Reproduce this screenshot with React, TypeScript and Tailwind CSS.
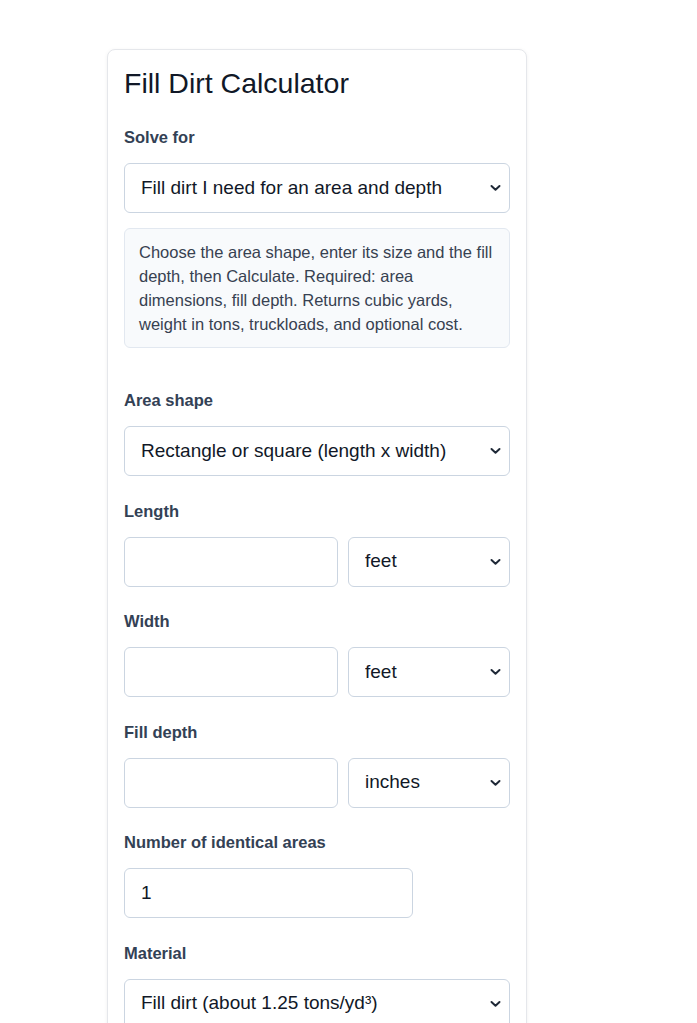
import { useState } from 'react'

const font = { fontFamily: '"Liberation Sans", Arial, sans-serif' }

function Chevron() {
  return (
    <svg
      className="pointer-events-none absolute right-[9px] top-1/2 -translate-y-1/2"
      width="11"
      height="7"
      viewBox="0 0 11 7"
      fill="none"
    >
      <path d="M1.5 1.5 L5.5 5.2 L9.5 1.5" stroke="#1f2937" strokeWidth="2" strokeLinecap="round" strokeLinejoin="round" />
    </svg>
  )
}

function Select({ value, options }: { value: string; options: string[] }) {
  const [v, setV] = useState(value)
  return (
    <div className="relative">
      <select
        value={v}
        onChange={(e) => setV(e.target.value)}
        className="block h-[50px] w-full appearance-none rounded-md border border-[#cbd5e1] bg-white pl-4 pr-8 text-[19px] text-[#111827] outline-none"
        style={font}
      >
        {options.map((o) => (
          <option key={o}>{o}</option>
        ))}
      </select>
      <Chevron />
    </div>
  )
}

function Input({ value = '', className = 'w-full' }: { value?: string; className?: string }) {
  const [v, setV] = useState(value)
  return (
    <input
      type="text"
      inputMode="decimal"
      value={v}
      onChange={(e) => setV(e.target.value)}
      className={`block h-[50px] rounded-md border border-[#cbd5e1] bg-white px-4 text-[19px] text-[#111827] outline-none ${className}`}
      style={font}
    />
  )
}

function Field({ label, children }: { label: string; children: React.ReactNode }) {
  return (
    <div className="mb-[22.5px]">
      <label className="mb-[14px] block text-[16.5px] font-bold leading-6 text-[#334155]">{label}</label>
      {children}
    </div>
  )
}

export default function App() {
  return (
    <div className="min-h-screen bg-white pl-[107px] pt-[49px]" style={font}>
      <div className="w-[420px] rounded-lg border border-[#e5e7eb] bg-white px-4 pt-4 pb-6 shadow-[0_1px_4px_rgba(15,23,42,0.06)]">
        <h1 className="mb-[25px] text-[28.5px] font-normal leading-[1.2] text-[#111827]">Fill Dirt Calculator</h1>

        <div className="mb-[40px]">
          <label className="mb-[14px] block text-[16.5px] font-bold leading-6 text-[#334155]">Solve for</label>
          <Select
            value="Fill dirt I need for an area and depth"
            options={[
              'Fill dirt I need for an area and depth',
              'Area I can cover with a given amount',
              'Depth I get from a given amount',
            ]}
          />
          <div className="mt-[15px] rounded-md border border-[#e2e8f0] bg-[#f8fafc] px-[14px] py-[11px] text-[16.5px] leading-6 text-[#374151]">
            Choose the area shape, enter its size and the fill depth, then Calculate. Required: area dimensions, fill depth. Returns cubic yards, weight in tons, truckloads, and optional cost.
          </div>
        </div>

        <Field label="Area shape">
          <Select
            value="Rectangle or square (length x width)"
            options={['Rectangle or square (length x width)', 'Circle (diameter)', 'Triangle (base x height)']}
          />
        </Field>

        <Field label="Length">
          <div className="grid grid-cols-[1fr_162px] gap-[10px]">
            <Input />
            <Select value="feet" options={['feet', 'yards', 'meters', 'inches']} />
          </div>
        </Field>

        <Field label="Width">
          <div className="grid grid-cols-[1fr_162px] gap-[10px]">
            <Input />
            <Select value="feet" options={['feet', 'yards', 'meters', 'inches']} />
          </div>
        </Field>

        <Field label="Fill depth">
          <div className="grid grid-cols-[1fr_162px] gap-[10px]">
            <Input />
            <Select value="inches" options={['inches', 'feet', 'centimeters']} />
          </div>
        </Field>

        <Field label="Number of identical areas">
          <Input value="1" className="w-[289px]" />
        </Field>

        <Field label="Material">
          <Select
            value="Fill dirt (about 1.25 tons/yd³)"
            options={['Fill dirt (about 1.25 tons/yd³)', 'Topsoil (about 1.1 tons/yd³)', 'Sand (about 1.35 tons/yd³)']}
          />
        </Field>

        <Field label="Price per cubic yard (optional)">
          <Input className="w-[289px]" />
        </Field>

        <button className="h-[48px] rounded-md bg-[#2563eb] px-6 text-[17px] font-bold text-white">Calculate</button>
      </div>
    </div>
  )
}
